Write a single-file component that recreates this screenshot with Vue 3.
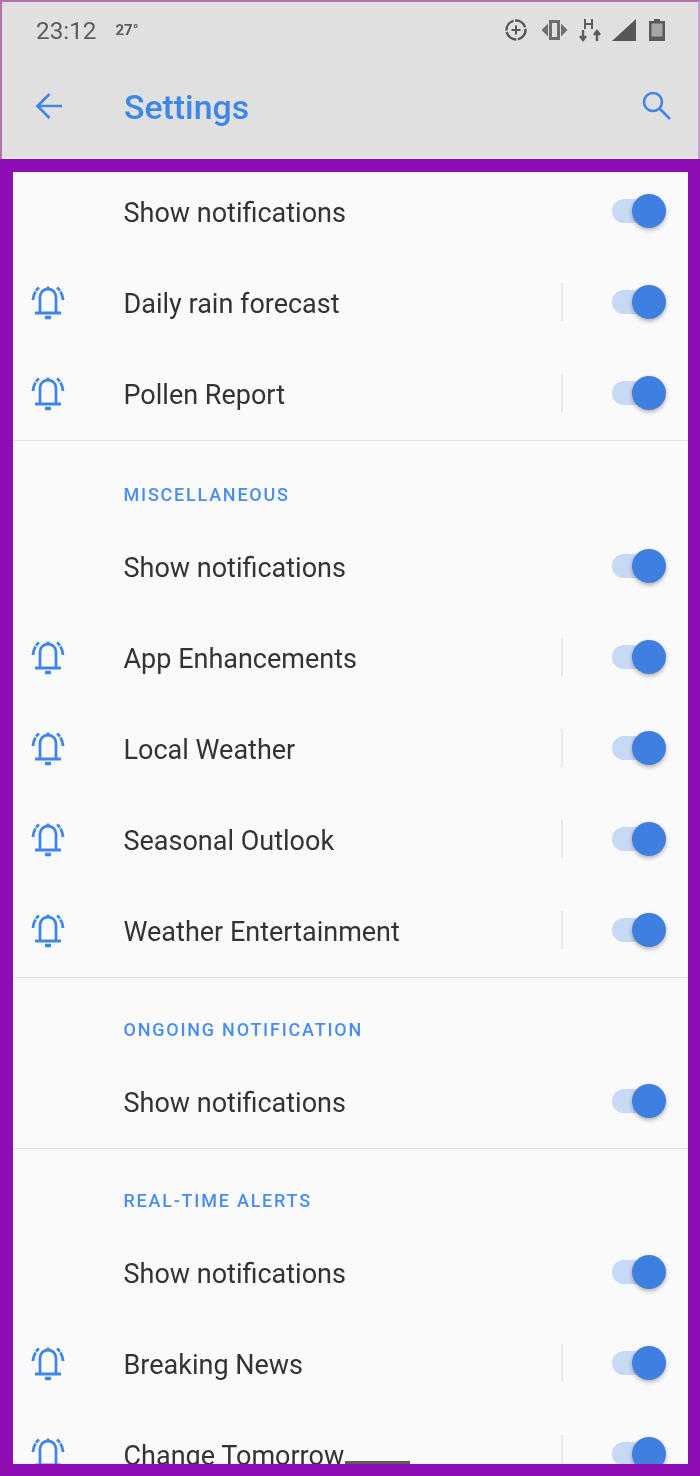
<script setup>
const sections = [
  {
    rows: [
      { label: 'Show notifications' },
      { label: 'Daily rain forecast', bell: true },
      { label: 'Pollen Report', bell: true }
    ]
  },
  {
    title: 'MISCELLANEOUS',
    rows: [
      { label: 'Show notifications' },
      { label: 'App Enhancements', bell: true },
      { label: 'Local Weather', bell: true },
      { label: 'Seasonal Outlook', bell: true },
      { label: 'Weather Entertainment', bell: true }
    ]
  },
  {
    title: 'ONGOING NOTIFICATION',
    rows: [{ label: 'Show notifications' }]
  },
  {
    title: 'REAL-TIME ALERTS',
    rows: [
      { label: 'Show notifications' },
      { label: 'Breaking News', bell: true },
      { label: 'Change Tomorrow', bell: true }
    ]
  }
]
</script>

<template>
  <div class="frame">
    <header class="header">
      <div class="status">
        <span class="time">23:12</span>
        <span class="temp">27°</span>
        <div class="status-icons">
          <svg width="24" height="24" viewBox="0 0 24 24" fill="none" stroke="#565656">
            <circle cx="12" cy="12" r="9.500" stroke-width="2.400" stroke-dasharray="13 1.500" />
            <path d="M12 7.500v9M7.500 12h9" stroke-width="2" />
          </svg>
          <svg class="vibrate" width="27" height="20" viewBox="0 0 27 20" fill="#6e6e6e">
            <path d="M8 0h11v20H8zM11 3v14h5V3z" fill-rule="evenodd" />
            <path d="M7 3.500v13L0.500 10zM20 3.500v13l6.500-6.500z" />
          </svg>
          <svg width="22" height="24" viewBox="0 0 22 24" fill="none" stroke="#5c5c5c" stroke-width="2">
            <path d="M6 1v10M13 1v10M6 6h7" />
            <path d="M4 12v8M1 18l3 4 3-4M18 23v-9M15 17l3-4 3 4" stroke-width="2.400" />
          </svg>
          <svg width="24" height="22" viewBox="0 0 24 22" fill="#565656">
            <path d="M24 0v22H0z" />
          </svg>
          <svg class="battery" width="16" height="22" viewBox="0 0 16 22">
            <path d="M5 0h6v2h5v20H0V2h5z" fill="#5a5a5a" />
            <rect x="2.500" y="4.500" width="11" height="13" fill="#a5a5a5" />
          </svg>
        </div>
      </div>
      <div class="toolbar">
        <svg class="back" width="28" height="28" viewBox="0 0 28 28" fill="none" stroke="#3f86ea" stroke-width="2.600">
          <path d="M27 14H3M14.500 2 2.500 14l12 12" />
        </svg>
        <h1 class="title">Settings</h1>
        <svg class="search" width="32" height="32" viewBox="0 0 32 32" fill="none" stroke="#3f86ea" stroke-width="2.600">
          <circle cx="12" cy="12" r="9" />
          <path d="M18.500 18.500 29 29" />
        </svg>
      </div>
    </header>

    <main class="panel">
      <div class="list">
        <section v-for="(section, i) in sections" :key="i" class="section">
          <h2 v-if="section.title" class="section-title">{{ section.title }}</h2>
          <div v-for="row in section.rows" :key="row.label" class="row">
            <div class="bell-slot">
              <svg v-if="row.bell" width="36" height="36" viewBox="0 0 36 36" fill="none" stroke="#3f86ea" stroke-width="2.800">
                <path d="M10 28V13a8 8 0 0 1 16 0v15" />
                <path d="M5 29h26" stroke-width="3" />
                <path d="M15 33.500h6" stroke-width="3.500" />
                <path d="M18 2.500v3" />
                <path d="M3 16C3.300 10.500 5.500 6.500 9 3.500M33 16C32.700 10.500 30.500 6.500 27 3.500" stroke-dasharray="9 1" />
              </svg>
            </div>
            <span class="label">{{ row.label }}</span>
            <span v-if="row.bell" class="separator"></span>
            <span class="toggle"><span class="thumb"></span></span>
          </div>
        </section>
      </div>
      <span class="home-bar"></span>
    </main>
  </div>
</template>

<style>
html,
body {
  margin: 0;
  background: #8f0db5;
}
</style>

<style scoped>
.frame {
  display: flex;
  flex-direction: column;
  width: 700px;
  height: 1476px;
  overflow: hidden;
  background: #8f0db5;
  font-family: Roboto, "Liberation Sans", sans-serif;
  filter: blur(0.4px);
}

.header {
  box-sizing: border-box;
  flex: none;
  height: 159px;
  padding-bottom: 2px;
  background: #e0e0e0;
  border-top: 2px solid #b470b0;
  border-left: 2px solid #b470b0;
  border-right: 2px solid #c9a2c8;
  box-shadow: inset 0 -2px 0 #efe6f0;
}

.status {
  display: flex;
  align-items: center;
  height: 56px;
  padding: 0 33px 0 34px;
}

.time {
  font-size: 24.300px;
  color: #5c5c5c;
}

.temp {
  margin-left: 19px;
  font-size: 15px;
  font-weight: 700;
  color: #5c5c5c;
}

.status-icons {
  display: flex;
  align-items: center;
  gap: 11px;
  margin-left: auto;
}

.vibrate {
  margin-left: 2px;
}

.battery {
  margin-left: 2px;
}

.toolbar {
  display: flex;
  align-items: center;
  height: 96px;
  padding: 0 25px 0 33px;
}

.title {
  margin: 0 0 0 61px;
  padding-top: 3px;
  font-size: 33.800px;
  font-weight: 500;
  color: #3f86ea;
}

.search {
  margin-left: auto;
}

.panel {
  position: relative;
  flex: 1;
  min-height: 0;
  margin: 13px 12px 12px 13px;
  overflow: hidden;
  background: #fafafa;
}

.list {
  margin-top: -6.500px;
}

.section {
  padding-bottom: 1px;
}

.section + .section {
  border-top: 1px solid #e2e2e2;
}

.section-title {
  box-sizing: border-box;
  height: 78px;
  margin: 0;
  padding: 42px 0 0 110.500px;
  font-size: 18px;
  line-height: 20px;
  font-weight: 500;
  letter-spacing: 1.770px;
  color: #4a8df0;
}

.section:nth-child(2) .section-title {
  height: 80px;
  padding-top: 44px;
}

.row {
  display: flex;
  align-items: center;
  height: 91px;
  padding-right: 28px;
}

.bell-slot {
  display: flex;
  flex: none;
  box-sizing: border-box;
  width: 110.500px;
  padding-left: 17px;
}

.label {
  padding-top: 4px;
  font-size: 27px;
  color: #333;
}

.separator {
  width: 2px;
  height: 38px;
  margin-left: auto;
  background: #e8e8e8;
}

.toggle {
  position: relative;
  width: 48px;
  height: 24px;
  margin-left: 49px;
  border-radius: 12px;
  background: #c6d9f5;
}

.label + .toggle {
  margin-left: auto;
}

.thumb {
  position: absolute;
  top: -5px;
  right: -6px;
  width: 34px;
  height: 34px;
  border-radius: 50%;
  background: #3f7fe0;
  box-shadow: 0 2px 4px rgba(0, 0, 0, 0.3);
}

.home-bar {
  position: absolute;
  left: 332px;
  bottom: 0;
  width: 65px;
  height: 3px;
  background: #5a5f5a;
}
</style>
